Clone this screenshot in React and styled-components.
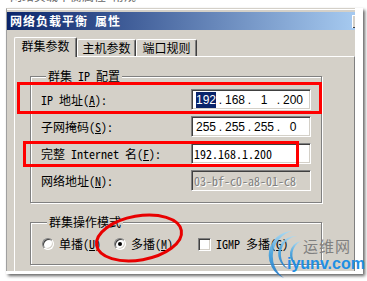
import React from "react";
import styled, { createGlobalStyle } from "styled-components";

const sim = `"Noto Sans Mono CJK SC", "Noto Sans CJK SC", "Liberation Mono", monospace`;

const Global = createGlobalStyle`
  html, body { margin: 0; padding: 0; background: #fff; }
  body {
    width: 367px;
    height: 281px;
    overflow: hidden;
    font-family: ${sim};
    font-size: 12px;
    color: #000;
  }
`;

const Page = styled.div`
  width: 367px;
  height: 281px;
  overflow: hidden;
`;

const Cutoff = styled.div`
  height: 8px;
  padding-left: 10px;
  div {
    height: 2px;
    overflow: hidden;
  }
  span {
    display: block;
    margin-top: -11px;
    line-height: 13px;
    color: #666;
  }
`;

const Frame = styled.div`
  position: relative;
  margin-left: 6px;
  width: 357px;
  height: 266px;
  box-sizing: border-box;
  padding: 0 8px 3px 0;
  background: #fff;
  box-shadow: 2px 2px 3px rgba(0, 0, 0, 0.6);
`;

const Window = styled.div`
  height: 100%;
  box-sizing: border-box;
  background: #d4d0c8;
  border-top: 1px solid #d4d0c8;
  border-left: 1px solid #a0a0a0;
  box-shadow: inset 0 1px #fff;
  padding-top: 3px;
  overflow: hidden;
`;

const TitleBar = styled.div`
  height: 18px;
  display: flex;
  align-items: center;
  justify-content: space-between;
  background: linear-gradient(to right, #0a246a, #a6caf0);
`;

const Title = styled.div`
  padding-left: 3px;
  color: #fff;
  font-weight: bold;
  letter-spacing: 1px;
  line-height: 14px;
`;

const CloseStub = styled.div`
  width: 3px;
  height: 13px;
  background: #d4d0c8;
  box-shadow: inset 1px 1px #fff, inset 0 -1px #404040;
`;

const Body = styled.div`
  padding: 7px 0 0 7px;
`;

const Tabs = styled.div`
  display: flex;
  align-items: flex-end;
  height: 19px;
  position: relative;
  z-index: 1;
`;

const Tab = styled.div`
  box-sizing: border-box;
  width: ${(p) => p.$w}px;
  height: ${(p) => (p.$active ? 20 : 17)}px;
  margin-bottom: ${(p) => (p.$active ? -1 : 0)}px;
  padding-top: 1px;
  background: #d4d0c8;
  border-top: 1px solid #fff;
  border-left: 1px solid #fff;
  border-right: 1px solid #404040;
  border-radius: 2px 2px 0 0;
  box-shadow: inset -1px 0 #808080;
  text-align: center;
  line-height: 14px;
`;

const Panel = styled.div`
  height: 240px;
  border-top: 1px solid #fff;
  border-left: 1px solid #fff;
  border-right: 1px solid #808080;
  padding: 12px 0 0 15px;
`;

const Group = styled.fieldset`
  box-sizing: border-box;
  width: 292px;
  margin: ${(p) => p.$top}px 0 0 0;
  padding: ${(p) => p.$pad};
  border: 1px solid #808080;
  box-shadow: inset 1px 1px #fff, 1px 1px #fff;
`;

const Legend = styled.legend`
  margin-left: 5px;
  padding: 0 2px;
  line-height: 14px;
  background: #d4d0c8;
`;

const Rows = styled.div`
  display: grid;
  grid-template-columns: 150px 120px;
  row-gap: 6px;
  align-items: center;
`;

const Label = styled.div`
  line-height: 14px;
  white-space: pre;
`;

const Field = styled.div`
  box-sizing: border-box;
  height: 21px;
  display: flex;
  align-items: center;
  padding-left: ${(p) => p.$pl || 2}px;
  background: ${(p) => (p.$disabled ? "#d4d0c8" : "#fff")};
  border: 1px solid;
  border-color: #808080 #fff #fff #808080;
  box-shadow: inset 1px 1px #404040, inset -1px -1px #d4d0c8;
  color: ${(p) => (p.$disabled ? "#808080" : "#000")};
  text-shadow: ${(p) => (p.$disabled ? "1px 1px #fff" : "none")};
  white-space: pre;
`;

const Octet = styled.span`
  width: 22px;
  text-align: center;
  font-family: "Liberation Sans", Arial, sans-serif;
  font-size: 12px;
`;

const Dot = styled.span`
  width: 7px;
  text-align: center;
  font-family: "Liberation Sans", Arial, sans-serif;
  font-size: 12px;
`;

const Selected = styled.span`
  background: #0a246a;
  color: #fff;
  padding: 1px 0;
`;

const Options = styled.div`
  display: flex;
  align-items: center;
  height: 14px;
`;

const Option = styled.label`
  display: flex;
  align-items: center;
  gap: 5px;
  margin-left: ${(p) => p.$ml || 0}px;
  line-height: 14px;
  white-space: pre;
`;

const Radio = styled.span`
  box-sizing: border-box;
  width: 12px;
  height: 12px;
  border-radius: 50%;
  border: 1px solid;
  border-color: #808080 #fff #fff #808080;
  box-shadow: inset 1px 1px #404040, inset -1px -1px #d4d0c8;
  background: #fff;
  display: flex;
  align-items: center;
  justify-content: center;
  &::after {
    content: "";
    display: ${(p) => (p.$on ? "block" : "none")};
    width: 4px;
    height: 4px;
    border-radius: 50%;
    background: #000;
  }
`;

const Check = styled.span`
  box-sizing: border-box;
  width: 13px;
  height: 13px;
  border: 1px solid;
  border-color: #808080 #fff #fff #808080;
  box-shadow: inset 1px 1px #404040, inset -1px -1px #d4d0c8;
  background: #fff;
`;

const RedBox = styled.div`
  position: absolute;
  left: ${(p) => p.$x}px;
  top: ${(p) => p.$y}px;
  width: ${(p) => p.$w}px;
  height: ${(p) => p.$h}px;
  box-sizing: border-box;
  border: 3px solid #f00;
`;

const Overlay = styled.svg`
  position: absolute;
  left: 84px;
  top: 200px;
`;

const Watermark = styled.div`
  position: absolute;
  left: 260px;
  top: 220px;
  width: 100px;
  height: 54px;
`;

const Swirl = styled.svg`
  position: absolute;
  left: 0;
  top: 0;
  opacity: 0.88;
`;

const WmCn = styled.div`
  position: relative;
  margin: 9px 0 0 37px;
  font-family: "Noto Sans CJK SC", sans-serif;
  font-size: 15px;
  line-height: 18px;
  color: #808080;
  letter-spacing: 1px;
`;

const WmEn = styled.div`
  position: relative;
  margin: 0 0 0 21px;
  font-family: "Liberation Sans", Arial, sans-serif;
  font-weight: bold;
  font-size: 16px;
  line-height: 18px;
  color: #1e8fe3;
  white-space: nowrap;
`;

const IpField = ({ parts, sel }) => (
  <Field $pl={3}>
    {parts.map((p, i) => (
      <React.Fragment key={i}>
        {i > 0 && <Dot>.</Dot>}
        <Octet>{i === 0 && sel ? <Selected>{p}</Selected> : p}</Octet>
      </React.Fragment>
    ))}
  </Field>
);

export default function App() {
  return (
    <Page>
      <Global />
      <Cutoff>
        <div>
          <span>网络负载平衡属性 常规</span>
        </div>
      </Cutoff>
      <Frame>
        <Window>
          <TitleBar>
            <Title>网络负载平衡 属性</Title>
            <CloseStub />
          </TitleBar>
          <Body>
            <Tabs>
              <Tab $w={63} $active>群集参数</Tab>
              <Tab $w={59}>主机参数</Tab>
              <Tab $w={61}>端口规则</Tab>
            </Tabs>
            <Panel>
              <Group $top={0} $pad="6px 0 11px 10px">
                <Legend>群集 IP 配置</Legend>
                <Rows>
                  <Label>
                    IP 地址(<u>A</u>):
                  </Label>
                  <IpField parts={["192", "168", "1", "200"]} sel />
                  <Label>
                    子网掩码(<u>S</u>):
                  </Label>
                  <IpField parts={["255", "255", "255", "0"]} />
                  <Label>
                    完整 Internet 名(<u>F</u>):
                  </Label>
                  <Field>192.168.1.200</Field>
                  <Label>
                    网络地址(<u>N</u>):
                  </Label>
                  <Field $disabled>03-bf-c0-a8-01-c8</Field>
                </Rows>
              </Group>
              <Group $top={12} $pad="8px 0 13px 11px">
                <Legend>群集操作模式</Legend>
                <Options>
                  <Option>
                    <Radio />
                    <span>
                      单播(<u>U</u>)
                    </span>
                  </Option>
                  <Option $ml={13}>
                    <Radio $on />
                    <span>
                      多播(<u>M</u>)
                    </span>
                  </Option>
                  <Option $ml={25}>
                    <Check />
                    <span>
                      IGMP 多播(<u>G</u>)
                    </span>
                  </Option>
                </Options>
              </Group>
            </Panel>
          </Body>
        </Window>

        <RedBox $x={11} $y={74} $w={305} $h={32} />
        <RedBox $x={17} $y={133} $w={276} $h={26} />
        <Overlay width="100" height="60" viewBox="0 0 100 60">
          <ellipse
            cx="49"
            cy="30"
            rx="43"
            ry="22"
            transform="rotate(-10 49 30)"
            fill="none"
            stroke="#e80000"
            strokeWidth="3"
          />
        </Overlay>

        <Watermark>
          <Swirl width="44" height="54" viewBox="0 0 44 54">
            <defs>
              <linearGradient id="wm" x1="0" y1="0" x2="0" y2="1">
                <stop offset="0" stopColor="#a8dcf8" />
                <stop offset="0.5" stopColor="#3a9ee0" />
                <stop offset="1" stopColor="#1670c4" />
              </linearGradient>
            </defs>
            <path d="M26 3 A24.4 24.4 0 0 0 18 50 A26.4 26.4 0 0 1 26 3 Z" fill="url(#wm)" />
            <path d="M31 8 A17.5 17.5 0 0 0 24 42 A18.3 18.3 0 0 1 31 8 Z" fill="url(#wm)" />
            <path d="M35 13 A13.4 13.4 0 0 0 31 38 A15.5 15.5 0 0 1 35 13 Z" fill="url(#wm)" />
          </Swirl>
          <WmCn>运维网</WmCn>
          <WmEn>iyunv.com</WmEn>
        </Watermark>
      </Frame>
    </Page>
  );
}
